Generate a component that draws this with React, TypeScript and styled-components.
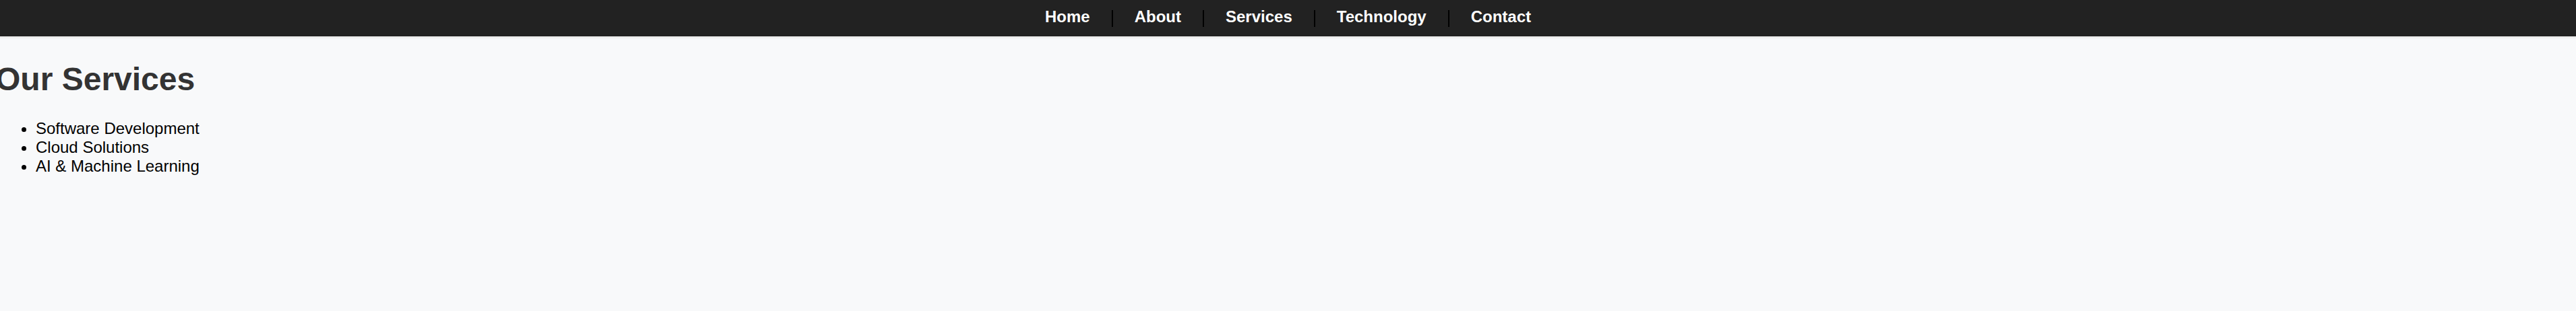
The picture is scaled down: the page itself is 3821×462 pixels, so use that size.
import React from "react";
import styled, { createGlobalStyle } from "styled-components";

const GlobalStyle = createGlobalStyle`
  html, body {
    margin: 0;
    padding: 0;
    background: #f8f9fa;
    font-family: "Liberation Sans", Arial, sans-serif;
    min-height: 100%;
  }
  #root {
    min-height: 100vh;
  }
`;

const NavBar = styled.nav`
  box-sizing: border-box;
  height: 57px;
  background: #222222;
  border-bottom: 3px solid #eeeeee;
  padding-top: 11px;
  display: flex;
  justify-content: center;
  align-items: flex-start;
  gap: 32px;
`;

const NavLink = styled.a`
  color: #ffffff;
  font-size: 24px;
  font-weight: bold;
  text-decoration: none;
  line-height: normal;
  cursor: pointer;
`;

const Separator = styled.span`
  display: block;
  width: 2px;
  height: 25px;
  margin-top: 4px;
  background: #000000;
`;

const Main = styled.main`
  display: block;
`;

const Heading = styled.h1`
  font-size: 48px;
  font-weight: bold;
  color: #333333;
  margin: 33px 0 32px -7px;
  line-height: normal;
`;

const ServiceList = styled.ul`
  margin: 16px 0;
  padding-left: 53px;
  font-size: 24px;
  color: #000000;
  line-height: normal;
`;

const ServiceItem = styled.li`
  list-style: disc;
`;

const links = ["Home", "About", "Services", "Technology", "Contact"];
const services = ["Software Development", "Cloud Solutions", "AI & Machine Learning"];

export default function App() {
  return (
    <>
      <GlobalStyle />
      <NavBar>
        {links.map((l, i) => (
          <React.Fragment key={l}>
            {i > 0 && <Separator />}
            <NavLink>{l}</NavLink>
          </React.Fragment>
        ))}
      </NavBar>
      <Main>
        <Heading>Our Services</Heading>
        <ServiceList>
          {services.map((s) => (
            <ServiceItem key={s}>{s}</ServiceItem>
          ))}
        </ServiceList>
      </Main>
    </>
  );
}
